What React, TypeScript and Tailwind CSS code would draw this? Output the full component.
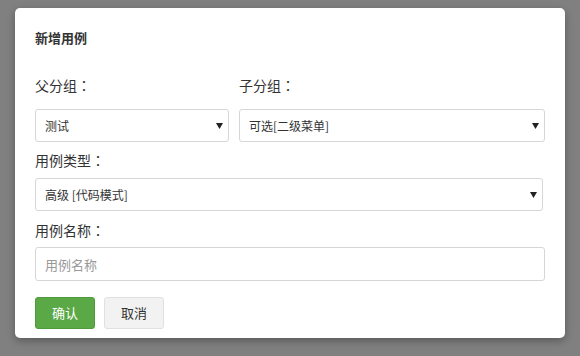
const font = { fontFamily: '"Microsoft YaHei", "Noto Sans CJK SC", sans-serif' };

const Arrow = () => (
  <svg width="7" height="6" viewBox="0 0 7 6" className="shrink-0">
    <path d="M0 0h7L3.5 6z" fill="#222" />
  </svg>
);

const Label = ({ text, className = "" }: { text: string; className?: string }) => (
  <div className={`h-[20px] leading-[20px] text-[14px] text-[#333] ${className}`}>
    {text}
    <span className="font-['Noto_Sans_CJK_TC',sans-serif]">：</span>
  </div>
);

const Select = ({ value, className }: { value: string; className: string }) => (
  <div
    className={`h-[33px] flex items-center justify-between border border-[#d6d6d6] rounded-[3px] bg-white pl-[9px] pr-[5px] text-[12px] text-[#333] ${className}`}
  >
    <span>{value}</span>
    <Arrow />
  </div>
);

export default function App() {
  return (
    <div className="w-[580px] h-[356px] bg-[#808080] pt-[8px] px-[15px]" style={font}>
      <div className="w-[550px] h-[330px] bg-white rounded-[5px] shadow-[0_3px_9px_rgba(0,0,0,0.3)] px-[20px] pt-[20px]">
        <h3 className="h-[20px] leading-[20px] text-[13px] font-bold text-[#333]">新增用例</h3>

        <div className="mt-[27px] flex gap-[10px]">
          <div className="w-[194px]">
            <Label text="父分组" />
            <Select value="测试" className="mt-[14px]" />
          </div>
          <div className="w-[306px]">
            <Label text="子分组" />
            <Select value="可选[二级菜单]" className="mt-[14px]" />
          </div>
        </div>

        <Label text="用例类型" className="mt-[8px]" />
        <Select value="高级 [代码模式]" className="mt-[8px] w-[508px]" />

        <Label text="用例名称" className="mt-[9px]" />
        <input
          placeholder="用例名称"
          className="mt-[7px] w-[510px] h-[34px] border border-[#d6d6d6] rounded-[3px] px-[9px] text-[13px] text-[#333] placeholder:text-[#999] outline-none"
        />

        <div className="mt-[16px] flex gap-[9px]">
          <button className="w-[60px] h-[32px] rounded-[3px] bg-[#5aa846] border border-[#4f9a3d] text-white text-[13px]">
            确认
          </button>
          <button className="w-[60px] h-[32px] rounded-[3px] bg-[#f2f2f2] border border-[#e0e0e0] text-[#333] text-[13px]">
            取消
          </button>
        </div>
      </div>
    </div>
  );
}
